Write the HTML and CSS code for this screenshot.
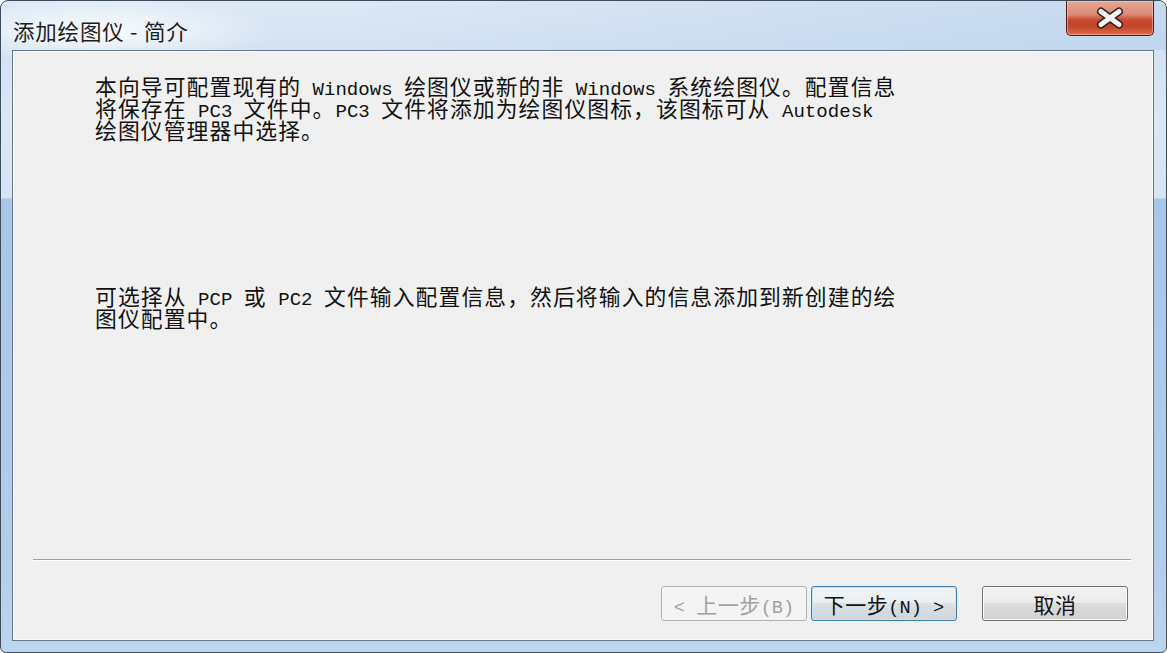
FILE: index.html
```
<!DOCTYPE html>
<html>
<head>
	<meta charset='utf-8'/>
	<title>添加绘图仪 - 简介</title>
	<link rel="stylesheet" href="styles.css">
</head>
<body>
	<div class="window">
		<div class="titlebar">
			<span class="title">添加绘图仪 - 简介</span>
			<div class="close">
				<svg width="32" height="22" viewBox="0 0 32 22">
					<path d="M7 4.5 L25 17.5 M25 4.5 L7 17.5" stroke="#3b1a14" stroke-width="8" stroke-linecap="round" fill="none"/>
					<path d="M7 4.5 L25 17.5 M25 4.5 L7 17.5" stroke="#f4f4f4" stroke-width="5" stroke-linecap="round" fill="none"/>
				</svg>
			</div>
		</div>
		<div class="client">
			<p class="text intro">本向导可配置现有的<span class="en"> Windows </span>绘图仪或新的非<span class="en"> Windows </span>系统绘图仪。配置信息<br>将保存在<span class="en"> PC3 </span>文件中。<span class="en">PC3 </span>文件将添加为绘图仪图标，该图标可从<span class="en"> Autodesk</span><br>绘图仪管理器中选择。</p>
			<p class="text import">可选择从<span class="en"> PCP </span>或<span class="en"> PC2 </span>文件输入配置信息，然后将输入的信息添加到新创建的绘<br>图仪配置中。</p>
			<div class="footer">
				<div class="sep"></div>
				<div class="buttons">
					<button class="btn disabled"><span class="en">&lt; </span>上一步<span class="en">(B)</span></button>
					<button class="btn default">下一步<span class="en">(N) &gt;</span></button>
					<button class="btn cancel">取消</button>
				</div>
			</div>
		</div>
	</div>
</body>
</html>
```

FILE: styles.css
```
*{
	margin: 0;
	padding: 0;
	box-sizing: border-box;
}
body{
	background: #fff;
	width: 1167px;
	height: 653px;
	overflow: hidden;
}
.window{
	width: 1167px;
	height: 653px;
	border: 1px solid #3d4b5a;
	border-radius: 8px 8px 6px 6px;
	padding: 0 12px 11px 11px;
	display: flex;
	flex-direction: column;
	background:
		radial-gradient(ellipse 180px 34px at 100px 30px, rgba(255,255,255,.85), rgba(255,255,255,0)),
		linear-gradient(to bottom, #dde8f5 0, #d3e2f2 49px, #dae7f5 120px, #d6e4f3 197px, #a8c6e8 198px, #b3ceeb 560px, #bdd6ef 100%);
}
.titlebar{
	height: 49px;
	display: flex;
	justify-content: space-between;
	align-items: flex-start;
	flex-shrink: 0;
	background: linear-gradient(to right, rgba(190,212,238,0) 30%, rgba(170,200,232,.45) 100%);
	margin: 0 -12px 0 -11px;
	padding: 0 12px 0 12px;
	border-radius: 7px 7px 0 0;
}
.title{
	font-family: "Noto Sans CJK SC", sans-serif;
	font-size: 21.5px;
	line-height: 24px;
	color: #1c1c1c;
	margin-top: 18px;
	letter-spacing: 0.8px;
}
.close{
	width: 88px;
	height: 35px;
	border: 1px solid #4c1c14;
	border-top: none;
	border-radius: 0 0 5px 5px;
	background: linear-gradient(to bottom, #e6a795 0%, #db8b76 40%, #c84a30 55%, #c5442a 75%, #dc6e4f 100%);
	box-shadow: inset 0 0 0 1px rgba(255,220,210,.45);
	display: flex;
	align-items: center;
	justify-content: center;
}
.client{
	flex: 1;
	background: #f0f0f0;
	border: 1px solid #66768a;
	box-shadow: inset 0 0 0 1px #fbfbfb;
	display: flex;
	flex-direction: column;
}
.text{
	font-family: "Noto Sans CJK SC", sans-serif;
	font-size: 21.8px;
	letter-spacing: 1.1px;
	line-height: 22px;
	color: #111;
	white-space: nowrap;
	padding-left: 82px;
}
.en{
	font-family: "Liberation Mono", monospace;
	font-size: 19.08px;
	letter-spacing: 0;
	line-height: 0;
}
.intro{
	margin-top: 24px;
}
.import{
	margin-top: 144px;
}
.footer{
	margin-top: auto;
	padding: 0 22px 19px 20px;
}
.sep{
	height: 2px;
	border-top: 1px solid #a0a0a0;
	border-bottom: 1px solid #fff;
}
.buttons{
	margin-top: 25px;
	display: flex;
	justify-content: flex-end;
	padding-right: 3px;
}
.btn{
	width: 146px;
	height: 35px;
	border: 1px solid #707070;
	border-radius: 3px;
	font-family: "Noto Sans CJK SC", sans-serif;
	font-size: 21px;
	letter-spacing: 0.5px;
	line-height: 22px;
	color: #111;
	background: linear-gradient(to bottom, #f2f2f2 0%, #ebebeb 50%, #dddddd 50%, #cfcfcf 100%);
	box-shadow: inset 0 0 0 1px #fcfcfc;
	white-space: nowrap;
}
.btn .en{
	font-size: 18.6px;
}
.btn.disabled{
	color: #a0a0a0;
	border-color: #adb2b5;
	background: #f4f4f4;
	box-shadow: none;
}
.btn.default{
	margin-left: 4px;
	border-color: #3c7fb1;
	box-shadow: inset 0 0 0 1px #bfe4f8;
	background: linear-gradient(to bottom, #f0f4f7 0%, #e9eef2 50%, #dbe1e6 50%, #cfd6dc 100%);
}
.btn.cancel{
	margin-left: 25px;
}
```
